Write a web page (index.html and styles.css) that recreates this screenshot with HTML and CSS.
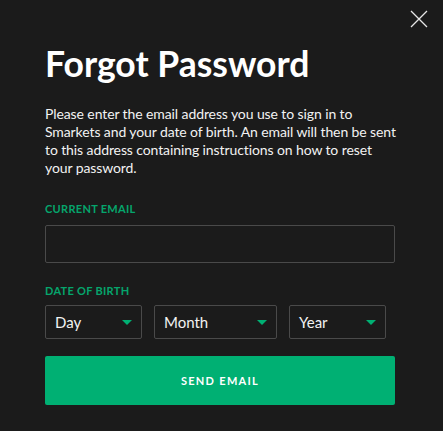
FILE: index.html
```html
<!DOCTYPE html>
<html lang="en">
<head>
    <meta charset="UTF-8">
    <meta name="viewport" content="width=device-width, initial-scale=1.0">
    <title>Forgot Password</title>
    <link rel="stylesheet" href="styles.css">
</head>
<body>
    <div class="modal">
        <button class="close-btn" aria-label="Close">
            <svg width="18" height="18" viewBox="0 0 18 18">
                <path d="M1 1 L17 17 M17 1 L1 17" stroke="#e6e6e6" stroke-width="1.3" fill="none"/>
            </svg>
        </button>

        <h1 class="title">Forgot Password</h1>
        <p class="intro">Please enter the email address you use to sign in to Smarkets and your date of birth. An email will then be sent to this address containing instructions on how to reset your password.</p>

        <form class="form">
            <label class="field-label" for="email">CURRENT EMAIL</label>
            <input class="text-input" id="email" type="email">

            <div class="field-label dob-label">DATE OF BIRTH</div>
            <div class="dob-row">
                <div class="select select-day"><span>Day</span><i class="caret"></i></div>
                <div class="select select-month"><span>Month</span><i class="caret"></i></div>
                <div class="select select-year"><span>Year</span><i class="caret"></i></div>
            </div>

            <button class="submit-btn" type="button">SEND EMAIL</button>
        </form>
    </div>
</body>
</html>
```

FILE: styles.css
```css
:root {
    --bg: #1b1b1b;
    --green: #00b073;
    --label-green: #05a56c;
    --border: #4a4a4a;
    --text: #f2f2f2;
}

body {
    margin: 0;
    background: var(--bg);
    font-family: 'Lato', sans-serif;
    color: var(--text);
}

.modal {
    position: relative;
    padding: 40px 30px 26px 45px;
}

.close-btn {
    position: absolute;
    top: 10px;
    right: 15px;
    padding: 0;
    background: none;
    border: none;
    cursor: pointer;
    line-height: 0;
}

.title {
    margin: 0;
    font-size: 35.5px;
    line-height: 48px;
    font-weight: 700;
    color: #fff;
}

.intro {
    margin: 17px 0 0;
    max-width: 356px;
    font-size: 14px;
    line-height: 18px;
    letter-spacing: -0.1px;
}

.form {
    display: flex;
    flex-direction: column;
    align-items: flex-start;
    margin-top: 25px;
}

.field-label {
    font-size: 11px;
    font-weight: 700;
    letter-spacing: 0.3px;
    color: var(--label-green);
    line-height: 14px;
}

.text-input {
    margin-top: 9px;
    height: 38px;
    box-sizing: border-box;
    width: 350px;
    background: transparent;
    border: 1px solid var(--border);
    border-radius: 2px;
    color: var(--text);
}

.dob-label {
    margin-top: 21px;
}

.dob-row {
    display: flex;
    gap: 12px;
    margin-top: 7px;
}

.select {
    box-sizing: border-box;
    height: 34px;
    display: flex;
    align-items: center;
    justify-content: space-between;
    padding: 0 9px;
    border: 1px solid var(--border);
    border-radius: 2px;
    font-size: 15px;
}

.select-day,
.select-year {
    width: 97px;
}

.select-month {
    width: 123px;
}

.caret {
    width: 0;
    height: 0;
    border-left: 5px solid transparent;
    border-right: 5px solid transparent;
    border-top: 5px solid var(--green);
}

.submit-btn {
    margin-top: 17px;
    width: 350px;
    height: 49px;
    background: var(--green);
    border: none;
    border-radius: 2px;
    color: #fff;
    font-family: 'Lato', sans-serif;
    font-size: 11px;
    font-weight: 700;
    letter-spacing: 1.3px;
    cursor: pointer;
}
```
